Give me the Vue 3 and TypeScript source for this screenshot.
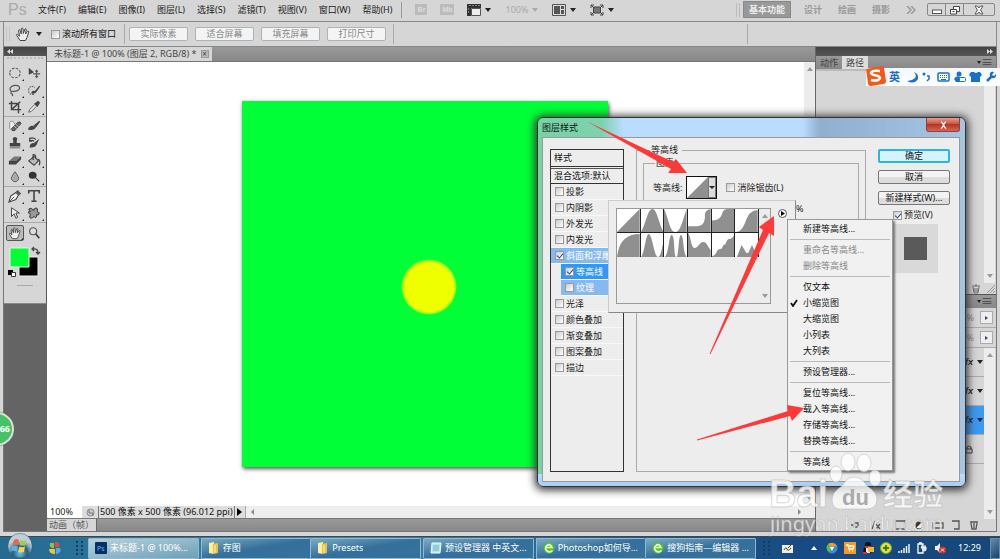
<script setup lang="ts">
import { ref } from 'vue'

interface Shape { d: string; f?: string; s?: string; w?: number; dash?: string }
interface Tool { name: string; shapes: Shape[]; more: boolean; active?: boolean }
interface StyleRow { name: string; checked: boolean; kind?: 'on' | 'sub-on' | 'sub' }
interface MenuRow { text?: string; disabled?: boolean; checked?: boolean }

const menus = ['文件(F)', '编辑(E)', '图像(I)', '图层(L)', '选择(S)', '滤镜(T)', '视图(V)', '窗口(W)', '帮助(H)']
const fitButtons = ['实际像素', '适合屏幕', '填充屏幕', '打印尺寸']
const workspaces = ['设计', '绘画', '摄影']
const scrollAll = ref(false)
const zoomLevel = ref('100%')
const antialias = ref(false)
const preview = ref(true)

const hand: Shape = { d: 'M5 14.500L1.800 9.500Q1.200 8 2.600 8.300L4.500 10.200L3.500 4.500Q4 3 5 4.300L6.200 7.800L6.300 2.600Q7.200 1.400 8 2.600L8.300 7.500L10 3Q11.200 2.300 11.300 3.600L10.600 8L12.600 5.300Q14 4.800 13.700 6.200L12 11.500L10.500 14.500Z', f: '#eee', s: '#444', w: 1 }

const toolGroups: Tool[][] = [
  [
    { name: '椭圆选框', more: true, shapes: [{ d: 'M2 8A6 5.500 0 1 0 14 8A6 5.500 0 1 0 2 8', s: '#555', w: 1.2, dash: '3 1.500' }] },
    { name: '移动', more: false, shapes: [{ d: 'M2 2L8 7L2 10Z', f: '#444' }, { d: 'M11 5V13M7 9H15M9.500 6.500L11 5L12.500 6.500M9.500 11.500L11 13L12.500 11.500', s: '#555', w: 1.3 }] },
    { name: '套索', more: true, shapes: [{ d: 'M4 10C-1 5 6 2 11 3C16 5 12 10 6 9.500Q3 9 3.500 12Q6 12 5 15', s: '#555', w: 1.4 }] },
    { name: '快速选择', more: true, shapes: [{ d: 'M8 13Q1 14 2 7Q4 2 9 5', s: '#666', w: 1.2, dash: '2 1' }, { d: 'M14 3L9 9Q5 8 5 12Q9 13 11 10L15 4Z', f: '#444' }] },
    { name: '裁剪', more: true, shapes: [{ d: 'M4 1V11H15M1 4H12V15M4 11L14 2', s: '#444', w: 1.7 }] },
    { name: '吸管', more: true, shapes: [{ d: 'M2 14L3 11L9 5L11 7L5 13Z', f: '#eee', s: '#555', w: 1 }, { d: 'M8 4L12 8L13 6Q16 3 14 2Q12 0 10 3Z', f: '#444' }] }
  ],
  [
    { name: '修复画笔', more: true, shapes: [{ d: 'M2 7Q1 1 6 3L9 8L5 13Q1 12 2 7', f: '#eee', s: '#888', w: 1 }, { d: 'M4 11L11 4Q14 2 15 5L8 13Q5 15 4 11', f: '#666', s: '#444', w: 1 }, { d: 'M7 8L10 11M9 6L12 9', s: '#ccc', w: 1 }] },
    { name: '画笔', more: true, shapes: [{ d: 'M14 2L7 8L10 10L15 3Z', f: '#444' }, { d: 'M7 8Q3 7 1 12Q7 14 10 10Z', f: '#444' }] },
    { name: '仿制图章', more: true, shapes: [{ d: 'M6 8V5Q4 2 8 1Q12 2 10 5V8H14V12H2V8Z M2 13H14V14H2Z', f: '#444' }] },
    { name: '历史记录画笔', more: true, shapes: [{ d: 'M3 3Q7 1 10 4M3 6Q6 4 8 6M3 2V6H6', s: '#444', w: 1.4 }, { d: 'M14 3L8 8Q3 8 3 13Q9 14 11 10Z', f: '#444' }] },
    { name: '橡皮擦', more: true, shapes: [{ d: 'M1 9L7 4H15L9 9Z', f: '#777' }, { d: 'M1 9H9L15 4V7L9 13H1Z', f: '#444' }] },
    { name: '油漆桶', more: true, shapes: [{ d: 'M2 9L8 4L13 9L8 14Z', f: '#bbb', s: '#444', w: 1.2 }, { d: 'M7 8V2Q10 1 10 6M12 7Q16 8 14 14', s: '#444', w: 1.5 }] },
    { name: '模糊', more: true, shapes: [{ d: 'M8 2Q3 8 4 11Q8 16 12 11Q13 8 8 2', f: '#aaa', s: '#555', w: 1 }] },
    { name: '减淡', more: true, shapes: [{ d: 'M2 6A4.500 4 0 1 0 11 6A4.500 4 0 1 0 2 6', f: '#333' }, { d: 'M10 9L14 13', s: '#444', w: 1.5 }] }
  ],
  [
    { name: '钢笔', more: true, shapes: [{ d: 'M1 15L3 8L9 4L12 7L9 12Z', f: '#eee', s: '#444', w: 1.2 }, { d: 'M9 3L11 1L15 5L13 7Z', f: '#555' }, { d: 'M2 14L7 9', s: '#444', w: 1 }] },
    { name: '文字', more: true, shapes: [{ d: 'M2 5V2H14V5M8 2V14M5 14H11', s: '#444', w: 1.8 }] },
    { name: '路径选择', more: true, shapes: [{ d: 'M4 2V12L7 9L9 14L11 13L9 8H13Z', f: '#eee', s: '#444', w: 1.1 }] },
    { name: '自定形状', more: true, shapes: [{ d: 'M2 4Q5 1 7 5Q11 0 12 4Q11 7 14 8Q13 11 11 10Q11 15 8 12Q4 16 3 12Q5 9 2 8Q1 6 4 6Z', f: '#999', s: '#444', w: 1.2 }] }
  ],
  [
    { name: '抓手', more: true, active: true, shapes: [hand] },
    { name: '缩放', more: false, shapes: [{ d: 'M3 6A4 4 0 1 0 11 6A4 4 0 1 0 3 6', f: '#ddd', s: '#555', w: 1.3 }, { d: 'M10 9L14 14', s: '#444', w: 2 }] }
  ]
]

const styles = ref<StyleRow[]>([
  { name: '投影', checked: false },
  { name: '内阴影', checked: false },
  { name: '外发光', checked: false },
  { name: '内发光', checked: false },
  { name: '斜面和浮雕', checked: true, kind: 'on' },
  { name: '等高线', checked: true, kind: 'sub-on' },
  { name: '纹理', checked: false, kind: 'sub' },
  { name: '光泽', checked: false },
  { name: '颜色叠加', checked: false },
  { name: '渐变叠加', checked: false },
  { name: '图案叠加', checked: false },
  { name: '描边', checked: false }
])

const contours = [
  'M0 24L24 0V24Z',
  'M0 24C5 16 7 0 12 0C17 0 19 16 24 24Z',
  'M0 0C5 10 6 24 12 24C18 24 20 10 24 0V24H0Z',
  'M0 18H7C15 18 18 16 18 6Q18 1 24 0V24H0Z',
  'M0 12C8 12 10 8 11 4Q12 0 17 0H24V24H0Z',
  'M0 24C14 24 8 2 24 1V24Z',
  'M0 24C2 8 10 1 24 1V24Z',
  'M0 24C4 20 5 1 8 1C12 1 14 24 18 24C21 24 22 15 24 8V24Z',
  'M0 24C5 24 5 2 8 2C12 2 10 24 13 24C16 24 15 2 18 2C21 2 20 20 24 24Z',
  'M0 0C3 2 3 15 7 15C11 15 12 9 16 9C20 9 21 14 24 17V24H0Z',
  'M0 23C3 23 5 19 6 17C9 15 10 18 12 12C15 13 15 6 18 6Q22 6 24 1V24H0Z',
  'M0 24H2L7 12L12 20L14 20L18 12L24 24Z'
]

const menuRows: MenuRow[] = [
  { text: '新建等高线...' }, {},
  { text: '重命名等高线...', disabled: true }, { text: '删除等高线', disabled: true }, {},
  { text: '仅文本' }, { text: '小缩览图', checked: true }, { text: '大缩览图' }, { text: '小列表' }, { text: '大列表' }, {},
  { text: '预设管理器...' }, {},
  { text: '复位等高线...' }, { text: '载入等高线...' }, { text: '存储等高线...' }, { text: '替换等高线...' }, {},
  { text: '等高线' }
]

const tasks = [
  { icon: 'ps', text: '未标题-1 @ 100%...', cls: 'active' },
  { icon: 'folder', text: '存图', cls: 'joined' },
  { icon: 'folder', text: 'Presets', cls: '' },
  { icon: 'note', text: '预设管理器 中英文...', cls: '' },
  { icon: 'browser', text: 'Photoshop如何导...', cls: 'joined' },
  { icon: 'browser', text: '搜狗指南—编辑器 ...', cls: '' }
]

const layerRows = ['fx', 'fx', 'fx', 'lock']
</script>

<template>
  <div class="screen">
    <header class="menubar">
      <span class="brand">Ps</span>
      <nav class="menus"><button v-for="m in menus" :key="m">{{ m }}</button></nav>
      <div class="apptools">
        <span class="mini">Br</span>
        <span class="mini mb">Mb</span>
        <button class="drop" aria-label="查看额外内容">
          <svg width="14" height="12" viewBox="0 0 14 12"><path d="M0 0H14V4H4V12H0Z" fill="#333" /><path d="M4.500 4.500H13.500V11.500H4.500Z" fill="#eee" stroke="#555" /><path d="M3 1V2M6 1V2M9 1V2M12 1V2M1 5H2M1 8H2" stroke="#ccc" /></svg><i class="caret"></i>
        </button>
        <button class="drop pale">100%<i class="caret"></i></button>
        <button class="drop" aria-label="排列文档">
          <svg width="14" height="12" viewBox="0 0 14 12"><path d="M.5.5H13.500V11.500H.5Z" fill="#ddd" stroke="#555" /><path d="M2 2H8V10H2ZM9 2H12V5H9ZM9 6H12V10H9Z" fill="#555" /></svg><i class="caret"></i>
        </button>
        <button class="drop" aria-label="屏幕模式">
          <svg width="14" height="12" viewBox="0 0 14 12"><path d="M3.500 3H10.500V9H3.500Z" fill="#777" stroke="#444" /><path d="M1 4V1H4M10 1H13V4M13 8V11H10M4 11H1V8M1 1L3 3M13 1L11 3M1 11L3 9M13 11L11 9" fill="none" stroke="#444" /></svg><i class="caret"></i>
        </button>
      </div>
      <div class="spaces">
        <i class="grip"></i>
        <button class="current">基本功能</button>
        <button v-for="w in workspaces" :key="w">{{ w }}</button>
        <svg width="10" height="8" viewBox="0 0 10 8"><path d="M1 0L5 4L1 8M5 0L9 4L5 8" fill="none" stroke="#999" stroke-width="1.500" /></svg>
      </div>
      <div class="winbtns">
        <button aria-label="最小化"><svg width="10" height="10" viewBox="0 0 10 10"><rect x=".5" y="5" width="9" height="3.500" fill="#fff" stroke="#555" /></svg></button>
        <button aria-label="还原"><svg width="10" height="10" viewBox="0 0 10 10"><path d="M3.500 1.500H9.500V6.500H3.500Z" fill="#fff" stroke="#444" /><path d="M.5 4.500H6.500V9H.5Z" fill="#fff" stroke="#444" /><path d="M2.500 6.500H4.500" stroke="#444" /></svg></button>
        <button class="wide" aria-label="关闭"><svg width="10" height="10" viewBox="0 0 10 10"><path d="M1 1H3.500L5 3L6.500 1H9L6.500 5L9 9H6.500L5 7L3.500 9H1L3.500 5Z" fill="#fff" stroke="#555" /></svg></button>
      </div>
    </header>

    <section class="options">
      <i class="grip"></i>
      <svg class="handicon" width="16" height="16" viewBox="0 0 16 16"><path :d="hand.d" :fill="hand.f" :stroke="hand.s" /></svg>
      <i class="caret"></i>
      <label class="check scrollall"><input v-model="scrollAll" type="checkbox">滚动所有窗口</label>
      <div class="fits"><button v-for="b in fitButtons" :key="b" disabled>{{ b }}</button></div>
      <i class="farline"></i>
    </section>

    <main class="work">
      <aside class="toolcol">
        <div class="darkhead"><svg width="6" height="5" viewBox="0 0 6 5"><path d="M3 0V5L0 2.500ZM6 0V5L3 2.500Z" fill="#ddd" /></svg></div>
        <div class="toolbox">
          <i class="dots"></i>
          <div v-for="(g, gi) in toolGroups" :key="gi" class="tgroup">
            <button v-for="t in g" :key="t.name" :class="{ on: t.active }" :aria-label="t.name">
              <svg width="14" height="14" viewBox="0 0 16 16"><path v-for="(p, i) in t.shapes" :key="i" :d="p.d" :fill="p.f || 'none'" :stroke="p.s || 'none'" :stroke-width="p.w || 1" :stroke-dasharray="p.dash" /></svg>
              <i v-if="t.more" class="more"></i>
            </button>
          </div>
          <svg class="swatches" width="36" height="44" viewBox="0 0 36 44"><path d="M12 12H31V31H12Z" fill="#000" stroke="#eee" /><path d="M3 3H22V22H3Z" fill="#00ff33" stroke="#eee" /><path d="M1 25H6V30H1Z" fill="#000" /><path d="M4.500 27.500H8.500V31.500H4.500Z" fill="#fff" stroke="#333" /><path d="M26 4Q31 3 31 8M27 2L25 4L27 6M29 7L31 9L33 7" fill="none" stroke="#444" stroke-width="1.300" /><path d="M10 40.500H26" stroke="#aaa" /></svg>
        </div>
      </aside>

      <section class="doc">
        <div class="doctabs"><div class="doctab">未标题-1 @ 100% (图层 2, RGB/8) *<button aria-label="关闭文档">×</button></div></div>
        <div class="view">
          <div class="stage"><div class="canvas"><div class="dot"></div></div></div>
          <div class="vscroll"><i class="up"></i><i class="down"></i></div>
        </div>
        <div class="status">
          <input v-model="zoomLevel" aria-label="缩放比例">
          <span class="clock"><svg width="9" height="9" viewBox="0 0 9 9"><circle cx="4.500" cy="4.500" r="3.500" fill="#ccc" stroke="#888" /><path d="M3 2V5H7V8" fill="none" stroke="#777" /></svg></span>
          <span class="size">500 像素 x 500 像素 (96.012 ppi)</span>
          <button aria-label="状态菜单"><svg width="5" height="8" viewBox="0 0 5 8"><path d="M0 0L5 4L0 8Z" /></svg></button>
          <div class="hscroll"><i class="left"></i><i class="right"></i></div>
        </div>
        <div class="anim"><button>动画（帧）</button></div>
      </section>

      <aside class="panels">
        <div class="darkhead end"><svg width="6" height="5" viewBox="0 0 6 5"><path d="M0 0V5L3 2.500ZM3 0V5L6 2.500Z" fill="#ddd" /></svg></div>
        <div class="ptabs"><button>动作</button><button class="sel">路径</button><span class="pm"><i class="caret"></i>≡</span></div>
        <div class="pbody"><div class="pscroll"><i class="down"></i></div></div>
        <div class="pfoot"><svg width="8" height="10" viewBox="0 0 8 10"><path d="M0 2H8M3 1H5M1 3L2 9H6L7 3M3 4V8M5 4V8" fill="none" stroke="#666" /></svg><svg width="8" height="8" viewBox="0 0 8 8"><path d="M0 8L8 0M3 8L8 3M6 8L8 6" stroke="#999" /></svg></div>
        <div class="ptabs second"><span class="pm"><i class="caret"></i>≡</span></div>
        <div v-for="n in 2" :key="n" class="prow"><span>%</span><button aria-label="数值滑块"><i></i></button></div>
        <div class="layers">
          <div class="lrows">
            <div v-for="(r, i) in layerRows" :key="i" class="lrow" :class="{ picked: i === 2 }">
              <em v-if="r === 'fx'">fx</em><i v-if="r === 'fx'" class="caret"></i>
              <svg v-else class="lock" width="8" height="9" viewBox="0 0 8 9"><path d="M1 4H7V8H1ZM2 4V2Q4 0 6 2V4" fill="none" stroke="#333" /></svg>
            </div>
          </div>
          <div class="pscroll"><i class="up"></i><i class="down"></i></div>
        </div>
        <div class="licons">
          <svg width="130" height="10" viewBox="0 0 130 10"><path d="M1 5H5M4 3H8V7H4ZM45 1H55V9H45ZM83 3H93V8H83ZM102 1H109V9H104" fill="none" stroke="#555" stroke-width="1.300" /><path d="M22 9L25 1M26 4L30 9M30 4L26 9M120 2H128M121 3L122 9H126L127 3M124 3V8" fill="none" stroke="#555" stroke-width="1.300" /><circle cx="69" cy="5" r="4" fill="#eee" stroke="#444" /><path d="M66 8A4 4 0 0 1 72 2Z" fill="#333" /></svg>
        </div>
      </aside>
    </main>

    <footer class="taskbar">
      <button class="orb" aria-label="开始"><svg width="26" height="26" viewBox="0 0 26 26"><defs><radialGradient id="orb" cy=".8"><stop offset="0" stop-color="#65c6e8" /><stop offset=".6" stop-color="#245d83" /><stop offset="1" stop-color="#a3b8c5" /></radialGradient></defs><circle cx="13" cy="13" r="12.500" fill="url(#orb)" stroke="#305870" /><path d="M2 11A11 11 0 0 1 24 11Q13 7 2 11" fill="#d5e3ea" opacity=".5" /><path d="M7 7Q9 5 12 7L11 12Q8 11 5 12Z" fill="#f4653c" /><path d="M13.500 7Q16 9 20 7L18.500 12Q15 13 12.500 12Z" fill="#a4ce48" /><path d="M5 13.500Q8 12 11 13.500L9.500 19Q7 17 4 18.500Z" fill="#55b3ed" /><path d="M12.500 13.500Q15 15 18 13.500L17 19Q14 20 11 19Z" fill="#fbd34a" /></svg></button>
      <svg class="quick" width="12" height="12" viewBox="0 0 12 12"><path d="M1 1H5V6H3Q0 5 1 1" fill="#8ac63f" /><path d="M6 0Q12 0 10 5H6Z" fill="#e84a3a" /><path d="M0 7H6V12Q0 12 0 7" fill="#f6c32c" /><path d="M7 6H11Q13 11 7 12Z" fill="#55a8f0" /></svg>
      <i class="tgrip"></i>
      <div class="tasks">
        <button v-for="t in tasks" :key="t.text" :class="t.cls">
          <svg v-if="t.icon === 'ps'" width="12" height="12" viewBox="0 0 12 12"><rect width="12" height="12" rx="1" fill="#052f65" /><text x="2" y="8.500" font-size="7" fill="#63b8ff">Ps</text></svg>
          <svg v-else-if="t.icon === 'folder'" width="12" height="12" viewBox="0 0 12 12"><path d="M1 1L6 0V12L1 11Z" fill="#fff0a0" /><path d="M5 2L10 1V11L5 12Z" fill="#e6c14c" /><path d="M7 3V11" stroke="#fff5b5" /></svg>
          <svg v-else-if="t.icon === 'note'" width="12" height="12" viewBox="0 0 12 12"><path d="M2 1H11L10 11H1Z" fill="#b7e4ec" stroke="#e8fcff" /><path d="M3 4H9M3 6H9M3 8H9" stroke="#6db5c4" /></svg>
          <svg v-else width="12" height="12" viewBox="0 0 12 12"><circle cx="6" cy="6" r="5.500" fill="#52c51c" /><path d="M9.500 8.500Q7 11 4 9Q1 6 4 3.500Q7 1 9 5.500H3" fill="none" stroke="#f0ffe0" stroke-width="1.600" /></svg>
          <span>{{ t.text }}</span>
        </button>
      </div>
      <i class="tgrip"></i>
      <div class="tray">
        <svg width="12" height="12" viewBox="0 0 12 12"><path d="M0 3H11V11H0Z" fill="#f1efdc" /><path d="M2 8Q4 4 5 7T9 6M6 6L11 1" fill="none" stroke="#443" /></svg>
        <svg class="tri" width="6" height="4" viewBox="0 0 6 4"><path d="M0 4L3 0L6 4Z" fill="#fff" /></svg>
        <svg width="12" height="12" viewBox="0 0 12 12"><circle cx="6" cy="6" r="5.500" fill="#378ddd" /><path d="M1 4Q5-1 10 3L6 5L4 10Q0 8 1 4" fill="#62bb47" /><path d="M2 2Q7-1 11 4L6 5Z" fill="#f29a22" /><path d="M4 5H8L6 9Z" fill="#fff" /></svg>
        <svg width="12" height="12" viewBox="0 0 12 12"><rect width="12" height="12" fill="#f89a22" /><path d="M2 3H4L5 7H9L10 4H4M5 9H6M8 9H9" fill="none" stroke="#fff" stroke-width="1.300" /></svg>
        <svg width="12" height="12" viewBox="0 0 12 12"><path d="M2 11Q0 8 3 5Q2 0 6 0T9 5Q11 8 9 11Z" fill="#111" /><path d="M4 6H8V11H4Z" fill="#eee" /><path d="M3 5H9M1 11H5" stroke="#e52e23" stroke-width="2" /><path d="M6 5H12V10H6Z" fill="#f5b632" /></svg>
        <svg width="12" height="12" viewBox="0 0 12 12"><circle cx="6" cy="6" r="5.500" fill="#fbd82c" stroke="#5bb431" /><path d="M6 3V9M3 6H9" stroke="#24872b" stroke-width="2" /></svg>
        <svg width="12" height="12" viewBox="0 0 12 12"><path d="M1 11V9M3.500 11V8M6 11V6M8.500 11V4M11 11V2" stroke="#eee" stroke-width="1.500" /></svg>
        <svg width="12" height="12" viewBox="0 0 12 12"><path d="M2 2H7V11H2ZM3 1H6" fill="none" stroke="#fff" stroke-width="1.300" /><path d="M5 5H10V8Q8 10 7 8ZM6 3V5M9 3V5" fill="#ddd" stroke="#fff" /></svg>
        <svg width="12" height="12" viewBox="0 0 12 12"><path d="M1 4H3L6 1V11L3 8H1Z" fill="#eee" /><circle cx="8.500" cy="8" r="3.500" fill="#dd3020" /><path d="M7 6.500L10 9.500M10 6.500L7 9.500" stroke="#fff" /></svg>
      </div>
      <time>12:29</time>
      <button class="desk" aria-label="显示桌面"></button>
    </footer>

    <div class="bubble">66</div>

    <div class="ime">
      <svg width="132" height="20" viewBox="0 0 132 20">
        <path d="M0 3L16 0Q18 0 18 2L20 15Q20 18 17 18L5 20Q2 20 2 17Z" fill="#f75818" /><path d="M14 5Q6 4 5 7Q6 9 12 10Q16 12 12 14Q9 15 5 14" fill="none" stroke="#fff" stroke-width="2.600" />
        <path d="M48 6Q54 13 41 15Q48 19 52 13Q53 8 48 6" fill="#1870c8" /><circle cx="58" cy="8" r="1.500" fill="#1870c8" /><path d="M61 10H63V13L61 15" fill="none" stroke="#1870c8" stroke-width="1.500" />
        <rect x="72" y="7" width="11" height="8" rx="1" fill="#fff" stroke="#1870c8" stroke-width="1.500" /><path d="M74 9.500H82M74 11.500H82" stroke="#1870c8" stroke-dasharray="1 1" /><path d="M75 13.500H80" stroke="#1870c8" />
        <circle cx="93" cy="8" r="2.500" fill="#1870c8" /><path d="M88 13Q90 9 94 11V16H90Z" fill="#1870c8" /><rect x="93.500" y="11.500" width="6" height="4" rx="1" fill="#fff" stroke="#1870c8" />
        <path d="M105 6H108Q110 8 112 6H114L116 9L114 11V16H105V11L103 9Z" fill="#1870c8" /><path d="M121 15L126 10" stroke="#1870c8" stroke-width="2.500" /><path d="M124 10Q123 5 128 6L126 9L128 10L130 8Q131 13 125 12Z" fill="#1870c8" />
      </svg>
      <span>英</span>
    </div>

    <section class="dialog" role="dialog" aria-label="图层样式">
      <div class="dtitle"><span>图层样式</span><button aria-label="关闭"><svg width="9" height="8" viewBox="0 0 9 8"><path d="M1 0H3L4.500 2L6 0H8L5.500 4L8 8H6L4.500 6L3 8H1L3.500 4Z" fill="#fff" stroke="#a33" stroke-width=".5" /></svg></button></div>
      <div class="dbody">
        <div class="stylelist">
          <div class="sh">样式</div>
          <div class="sh blend">混合选项:默认</div>
          <label v-for="s in styles" :key="s.name" class="check srow" :class="s.kind"><input v-model="s.checked" type="checkbox">{{ s.name }}</label>
        </div>
        <fieldset class="outer">
          <legend>等高线</legend>
          <fieldset class="inner">
            <legend>图素</legend>
            <div class="crow">
              <span>等高线:</span>
              <button class="cpick" aria-label="等高线"><svg viewBox="0 0 24 24" preserveAspectRatio="none"><path d="M0 24L24 0V24Z" fill="#909090" /></svg><b><i class="caret"></i></b></button>
              <label class="check"><input v-model="antialias" type="checkbox">消除锯齿(L)</label>
            </div>
            <div class="pct">%</div>
          </fieldset>
        </fieldset>
        <div class="actions">
          <button class="ok">确定</button>
          <button>取消</button>
          <button>新建样式(W)...</button>
          <label class="check"><input v-model="preview" type="checkbox">预览(V)</label>
          <div class="pv"><i></i></div>
        </div>
      </div>
    </section>

    <div class="picker">
      <div class="plist">
        <div class="cells"><button v-for="(c, i) in contours" :key="i" :aria-label="'等高线 ' + (i + 1)"><svg viewBox="0 0 24 24" preserveAspectRatio="none"><path :d="c" fill="#909090" /></svg></button></div>
        <div class="pscroll"><i class="up"></i><i class="down"></i></div>
      </div>
      <button class="fly" aria-label="选择器菜单"><svg width="9" height="9" viewBox="0 0 9 9"><circle cx="4.500" cy="4.500" r="4" fill="#fff" stroke="#555" /><path d="M3 2L7 4.500L3 7Z" /></svg></button>
    </div>

    <div class="ctx" role="menu">
      <template v-for="(m, i) in menuRows" :key="i">
        <hr v-if="!m.text">
        <button v-else role="menuitem" :disabled="m.disabled"><svg v-if="m.checked" width="8" height="8" viewBox="0 0 8 8"><path d="M1 4L3 7L7 1" fill="none" stroke="#111" stroke-width="1.800" /></svg>{{ m.text }}</button>
      </template>
    </div>

    <svg class="arrows" width="1000" height="559" viewBox="0 0 1000 559">
      <g fill="#ff3838"><path d="M587 121.500L673 162L676 159L687 173H668L671 169Z" /><path d="M709.500 354L763 230L759 227L774 216V236L769 233L710.500 354Z" /><path d="M697 439.500L788 411L787 405L804 408L792 421L790 416L697 440.500Z" /></g>
    </svg>

    <svg class="mark" width="190" height="90" viewBox="0 0 190 90">
      <g fill="#fff" fill-opacity=".78" stroke="#aaa" stroke-opacity=".45" stroke-width="1">
        <text class="latin" x="1" y="56" font-size="38">Bai</text>
        <ellipse cx="68" cy="23" rx="6" ry="8" /><ellipse cx="80" cy="11" rx="7" ry="9" /><ellipse cx="96" cy="12" rx="7" ry="9" /><ellipse cx="107" cy="27" rx="6" ry="8" />
        <path d="M86 26Q94 26 99 35Q109 41 109 49Q108 59 97 58H76Q64 60 64 49Q64 41 74 35Q79 26 86 26Z" />
        <text class="cjk" x="115" y="54" font-size="30">经验</text>
        <text class="url" x="2" y="80" font-size="20">jingyan.baidu.com</text>
      </g>
      <text class="latin" x="74" y="54" font-size="22" fill="#aaa">du</text>
    </svg>
  </div>
</template>

<style>
body { margin: 0; }
</style>

<style scoped>
* { box-sizing: border-box; }
.screen { position: relative; display: flex; flex-direction: column; min-height: 100vh; overflow: hidden; background: #d6d6d6; color: #222; font: 9px/12px "Noto Sans", "Noto Sans CJK SC", sans-serif; white-space: nowrap; }
button { margin: 0; padding: 0; border: 0; background: none; color: inherit; font: inherit; }
svg { display: block; flex: none; }
.caret { display: block; flex: none; width: 0; height: 0; border: 3px solid transparent; border-top: 4px solid #222; border-bottom: 0; }
.check { display: flex; align-items: center; gap: 2px; }
.check input { appearance: none; flex: none; width: 9px; height: 9px; margin: 0; border: 1px solid #999; background: linear-gradient(135deg, #ccc, #fff); }
.check input:checked::after { content: ""; display: block; width: 3px; height: 5px; margin-left: 2px; border: solid #334a88; border-width: 0 1px 1px 0; transform: rotate(40deg); }
.up, .down { display: block; width: 0; height: 0; border: 3px solid transparent; }
.up { border-top: 0; border-bottom: 4px solid #999; }
.down { border-bottom: 0; border-top: 4px solid #999; margin-top: auto; }

.menubar { display: flex; align-items: center; height: 22px; padding: 0 5px 2px 8px; border-bottom: 1px solid #888; }
.brand { width: 30px; color: #aaa; font: 16px/19px "Liberation Sans", sans-serif; }
.menus { display: flex; gap: 12px; }
.apptools { display: flex; align-items: center; gap: 13px; height: 16px; margin-left: 9px; padding-left: 13px; border-left: 1px solid #999; }
.mini { width: 12px; height: 11px; background: #bbb; color: #ddd; font: bold 7px/11px "Liberation Sans", sans-serif; text-align: center; }
.mb { width: 14px; }
.drop { display: flex; align-items: center; gap: 4px; margin-right: 1px; }
.pale { color: #aaa; }
.pale .caret { border-top-color: #aaa; }
.spaces { display: flex; align-items: center; gap: 16px; margin-left: auto; color: #999; font-weight: bold; }
.grip { display: block; width: 4px; height: 14px; border: solid #bbb; border-width: 0 1px; }
.spaces .grip { margin-right: -13px; }
.current { width: 48px; height: 17px; margin-right: -3px; border: 1px solid #888; background: #999; color: #eee; }
.winbtns { display: flex; height: 13px; margin-left: 11px; border: 1px solid #888; border-radius: 2px; }
.winbtns button { display: flex; align-items: center; justify-content: center; width: 18px; border-right: 1px solid #888; }
.winbtns .wide { width: 30px; border: 0; }

.options { display: flex; align-items: center; height: 25px; margin: 0 3px; border: solid #888; border-width: 0 1px 1px; }
.options > .grip { margin-left: 2px; border-color: #c4c4c4; }
.handicon { margin: 0 5px 0 5px; }
.scrollall { height: 20px; margin-left: 9px; padding-right: 8px; border-right: 1px solid #aaa; color: #111; }
.fits { display: flex; gap: 7px; height: 20px; align-items: center; margin-left: 4px; padding-right: 7px; border-right: 1px solid #aaa; }
.fits button { width: 59px; height: 14px; border: 1px solid #aab4b4; border-radius: 2px; background: #f4f4f4; color: #888; line-height: 12px; }
.farline { width: 1px; height: 20px; margin: 0 248px 0 auto; background: #aaa; }

.work { display: flex; flex: 1; margin: 0 3px; min-height: 0; border: solid #777; border-width: 0 1px 1px; }
.toolcol { width: 43px; flex: none; background: #646464; }
.darkhead { display: flex; align-items: center; height: 9px; padding: 0 3px; background: linear-gradient(#444, #555); }
.darkhead.end { justify-content: flex-end; }
.toolbox { border-right: 1px solid #555; border-bottom: 1px solid #888; background: #d6d6d6; }
.dots { display: block; height: 3px; margin: 0 3px 5px; border-bottom: 2px dotted #bbb; }
.tgroup { display: grid; grid-template-columns: 18px 20px; padding: 1px 2px; border-bottom: 1px solid #aaa; row-gap: 1px; }
.tgroup:nth-last-child(2) { border: 0; padding-top: 2px; }
.tgroup button { position: relative; display: flex; align-items: center; justify-content: center; height: 16px; }
.tgroup .on { border: 1px solid #555; border-radius: 2px; background: #bbb; }
.more { position: absolute; right: 0; bottom: 0; border: 1px solid #222; border-top-color: transparent; border-left-color: transparent; }
.swatches { margin: 3px 0 14px 3px; }
.doctabs { display: flex; height: 15px; background: linear-gradient(#999, #888); border-bottom: 1px solid #777; }
.doctab { display: flex; align-items: center; gap: 4px; padding: 0 3px 0 7px; background: #d6d6d6; color: #444; }
.doctab button { width: 8px; height: 8px; border: 1px solid #999; background: #bbb; line-height: 6px; font-size: 8px; }
.doc { flex: 1; display: flex; flex-direction: column; min-width: 0; }
.view { flex: 1; display: flex; background: #fff; }
.stage { flex: 1; display: flex; align-items: center; justify-content: center; padding-right: 2px; }
.canvas { display: flex; align-items: center; justify-content: center; width: 366px; height: 366px; background: #00ff36; box-shadow: 1px 2px 4px #555; }
.dot { width: 56px; height: 56px; margin: 6px 0 0 8px; border-radius: 50%; background: radial-gradient(circle closest-side, #f0ff00 88%, #a8ff18 94%, transparent); }
.vscroll, .pscroll { display: flex; flex-direction: column; align-items: center; width: 11px; padding: 5px 0; background: #ececec; }
.status { display: flex; height: 12px; background: #ddd; }
.status input { width: 35px; height: 12px; padding: 0 3px; border: 0; background: #fff; font: inherit; color: #222; }
.clock { width: 16px; padding: 2px 4px; }
.size { padding: 0 1px; border: solid #777; border-width: 0 1px; color: #111; }
.status button { display: flex; align-items: center; justify-content: center; width: 11px; border-right: 1px solid #aaa; }
.hscroll { flex: 1; display: flex; justify-content: space-between; align-items: center; padding: 0 14px 0 5px; background: #eee; }
.left, .right { border: 3px solid transparent; }
.left { border-left: 0; border-right-color: #888; }
.right { border-right: 0; border-left-color: #888; }
.anim { height: 13px; border-top: 1px solid #777; background: linear-gradient(#999, #888); }
.anim button { width: 50px; height: 12px; background: #d6d6d6; color: #555; border-right: 1px solid #666; }

.panels { width: 181px; flex: none; display: flex; flex-direction: column; border-left: 1px solid #666; background: #d6d6d6; }
.ptabs { display: flex; height: 13px; background: linear-gradient(#999, #888); color: #444; }
.ptabs button { width: 26px; }
.ptabs .sel { background: #ddd; }
.pm { display: flex; align-items: center; margin-left: auto; padding-right: 3px; color: #444; font-size: 12px; }
.pm .caret { border-width: 3px 2px 0; }
.pbody { height: 214px; display: flex; justify-content: flex-end; margin-right: 1px; border-top: 2px solid #bbb; }
.pfoot { display: flex; justify-content: flex-end; align-items: center; gap: 7px; height: 12px; padding-right: 1px; border-bottom: 1px solid #555; }
.ptabs.second { height: 13px; flex: none; }
.prow { display: flex; align-items: center; justify-content: flex-end; gap: 6px; height: 20px; padding-right: 3px; border-bottom: 1px solid #aaa; color: #888; }
.prow button { display: flex; align-items: center; justify-content: center; width: 13px; height: 13px; border: 1px solid #aaa; background: #eee; }
.prow i { border: 2px solid transparent; border-left: 3px solid #347; border-right: 0; }
.layers { flex: 1; display: flex; margin-right: 1px; }
.lrows { flex: 1; }
.lrow { display: flex; align-items: center; justify-content: flex-end; gap: 4px; height: 29px; padding-right: 1px; border-bottom: 1px solid #aaa; }
.lrow.picked { background: #3c98f0; }
.lrow em { font: italic bold 9px/12px "Liberation Sans", sans-serif; }
.lock { margin-right: 10px; }
.licons { display: flex; justify-content: flex-end; align-items: center; height: 12px; padding-right: 16px; }

.taskbar { display: flex; align-items: center; height: 23px; margin-top: 4px; border-top: 1px solid #444; background: linear-gradient(90deg, #256a91, #3b89ac 35%, #245f91 60%, #174b83 80%, #164779); color: #fff; }
.orb { margin: -4px 0 0 7px; }
.quick { margin: 0 15px 0 16px; }
.tgrip { width: 7px; height: 14px; border-left: 2px dotted #153c5c; border-right: 2px dotted #153c5c; }
.tasks { display: flex; gap: 2px; flex: 0 1 668px; margin: 0 7px 0 5px; }
.tasks button { flex: 1 1 0; min-width: 0; display: flex; align-items: center; gap: 3px; height: 21px; padding-left: 6px; border: 1px solid #8eb9cf; border-radius: 1px; background: linear-gradient(170deg, #78aac1, #356f9c 50%, #34739e); text-align: left; }
.tasks .active { background: linear-gradient(170deg, #b9d1da, #6ca0b8); }
.tasks .joined { margin-right: -2px; border-right: 0; }
.tasks span { overflow: hidden; }
.tray { display: flex; align-items: center; gap: 6px; margin-left: 12px; }
.tri { margin: 0 3px 0 11px; }
time { margin: 0 9px 0 auto; }
.desk { width: 10px; height: 21px; border: 1px solid #668caa; background: linear-gradient(135deg, #648bad, #15416c); }

.bubble { position: absolute; left: -20px; top: 412px; width: 34px; height: 34px; padding-right: 2px; border: 2px solid #ddd; border-radius: 50%; background: #45c467; color: #fff; font: bold 9px/30px "Noto Sans", sans-serif; text-align: right; box-shadow: 0 0 1px #555; }
.ime { position: absolute; right: 0; top: 66px; display: flex; width: 134px; height: 20px; background: linear-gradient(transparent 2px, #f2f8ff 2px, #fff); }
.ime span { position: absolute; left: 23px; top: 5px; color: #1870c8; font-size: 11px; font-weight: bold; }

.dialog { position: absolute; left: 537px; top: 117px; width: 429px; height: 370px; padding: 0 5px 5px 4px; border: 1px solid #333; border-radius: 6px; background: linear-gradient(#b9dcff, #a9ccf0) bottom / 100% 12px no-repeat, linear-gradient(90deg, #77d2a4, #7cd2ad 15%, #b9dcff 20%, #b9dcff 62%, #91afcf 66%, #a5c5e3); box-shadow: 0 1px 8px 2px #333; }
.dtitle { display: flex; justify-content: space-between; height: 19px; line-height: 19px; color: #111; }
.dtitle button { display: flex; align-items: center; justify-content: center; width: 34px; height: 14px; border: 1px solid #844; border-top: 0; border-radius: 0 0 3px 3px; background: linear-gradient(#e5a090, #c84a38 50%, #b93322 50%, #d86550); }
.dbody { display: flex; height: 345px; padding: 11px 9px 9px 7px; border: 1px solid #999; background: #ededed; }
.stylelist { width: 74px; flex: none; border: 1px solid #333; }
.sh { height: 17px; padding-left: 3px; border-bottom: 1px solid #333; color: #111; line-height: 16px; }
.blend { height: 16px; margin-top: 1px; border-top: 1px solid #555; line-height: 14px; }
.srow { height: 16px; padding-left: 4px; border-bottom: 1px solid #f8f8f8; overflow: hidden; }
.srow.on { background: #86b9ed; color: #fff; }
.srow.sub-on, .srow.sub { margin-left: 10px; background: #3097fb; color: #fff; }
.srow.sub { background: #86b9ed; }
fieldset { margin: 0; border: 1px solid #aaa; }
legend { padding: 0 4px 0 1px; }
.outer { flex: none; width: 230px; margin: -5px 12px 0 12px; padding: 1px 6px 6px; }
.outer > legend { margin-left: 7px; }
.inner { height: 150px; padding: 7px 9px; }
.inner > legend { margin-left: 2px; }
.crow { display: flex; align-items: center; gap: 4px; }
.cpick { display: flex; width: 31px; height: 23px; border: 1px solid #111; background: #fff; }
.cpick svg { width: 21px; height: 21px; }
.cpick b { display: flex; align-items: center; flex: 1; border: 1px solid #777; background: #ddd; }
.cpick .caret { border-width: 3px 3px 0; }
.crow .check { margin-left: 5px; }
.pct { margin: 4px 0 0 143px; }
.actions { display: flex; flex: 1; flex-direction: column; gap: 7px; }
.actions button { height: 14px; border: 1px solid #777; border-radius: 2px; background: linear-gradient(#f3f3f3 50%, #ddd 50%); color: #111; line-height: 12px; }
.actions .ok { border: 2px solid #28b6e2; background: #d6f2fc; line-height: 10px; }
.actions .check { height: 12px; margin: -3px 0 -4px 15px; }
.pv { display: flex; width: 46px; height: 49px; margin-left: 14px; background: #d9d9d9; }
.pv i { width: 23px; height: 23px; margin: auto; background: #5a5a5a; }
.picker { position: absolute; left: 608px; top: 200px; width: 188px; height: 113px; display: flex; align-items: flex-start; gap: 7px; padding: 7px; border: 1px solid #888; border-top-color: #ccc; border-left-color: #ccc; background: #ededed; }
.plist { display: flex; width: 155px; height: 96px; border: 1px solid #999; }
.cells { flex: 1; display: grid; grid-template-columns: repeat(6, 1fr); grid-auto-rows: 24px; align-content: start; }
.cells button { border: solid #222; border-width: 0 1px 1px 0; background: #fff; min-width: 0; }
.cells button:nth-child(n + 7) { border-bottom: 0; }
.cells svg { width: 100%; height: 100%; }
.fly { margin-top: 1px; }
.ctx { position: absolute; left: 787px; top: 219px; width: 106px; padding: 1px 2px 0; border: 1px solid #999; background: #f1f1f1; box-shadow: 2px 2px 2px #777; }
.ctx button { position: relative; display: block; width: 100%; height: 16px; padding-left: 13px; color: #111; line-height: 16px; text-align: left; }
.ctx button:disabled { color: #888; }
.ctx svg { position: absolute; left: 0; top: 4px; }
.ctx hr { height: 1px; margin: 2px 0; border: 0; background: #bbb; }
.arrows, .mark { position: absolute; left: 0; top: 0; pointer-events: none; }
.mark { left: 768px; top: 451px; font-family: "Liberation Sans", sans-serif; }
.latin { font-weight: bold; }
.cjk { font-family: "Noto Sans CJK SC", sans-serif; font-weight: bold; }
.url { font-family: "Noto Sans", sans-serif; }
</style>
